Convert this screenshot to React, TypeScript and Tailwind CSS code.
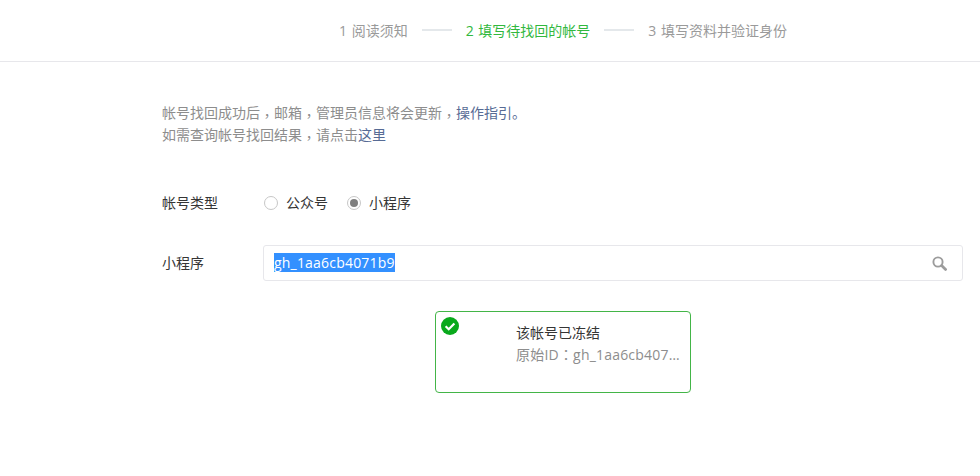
import React from "react"

const font = { fontFamily: '"Open Sans", "Noto Sans CJK SC", sans-serif' }

function Dash() {
    return <span className="w-[30px] h-[2px] bg-[#e4e8eb] mx-[14px]"></span>
}

// TC cut sets full-width punctuation in the middle of its box, like the reference
function Comma() {
    return <span className="relative top-[3px] leading-[0] font-['Noto_Sans_CJK_TC']">，</span>
}

function Radio({ label, checked }: { label: string; checked?: boolean }) {
    return (
        <label className="flex items-center text-[14px] text-[#353535]">
            <span className="w-[14px] h-[14px] rounded-full border border-[#c7c7c7] bg-white flex items-center justify-center mr-[8px]">
                {checked && <span className="w-2 h-2 rounded-full bg-[#7f7f7f]"></span>}
            </span>
            <span className="pb-[2px]">{label}</span>
        </label>
    )
}

export default function App() {
    return (
        <div className="w-[980px] h-[476px] bg-white overflow-hidden text-[14px]" style={font}>
            <div className="h-[62px] border-b border-[#e7e7eb] pl-[339px] flex items-center pb-[1px]">
                <div className="flex items-center text-[#9a9a9a] text-[14px]">
                    <span><span className="mr-px">1</span> 阅读须知</span>
                    <Dash />
                    <span className="text-[#32b83e]"><span className="mr-px">2</span> 填写待找回的帐号</span>
                    <Dash />
                    <span><span className="mr-px">3</span> 填写资料并验证身份</span>
                </div>
            </div>

            <div className="pl-[162px] pr-[17px]">
                <div className="mt-[40px] leading-[22px] text-[#8d8d8d]">
                    <p>
                        帐号找回成功后<Comma />邮箱<Comma />管理员信息将会更新<Comma /><span className="text-[#576b95]">操作指引。</span>
                    </p>
                    <p>
                        如需查询帐号找回结果<Comma />请点击<span className="text-[#576b95]">这里</span>
                    </p>
                </div>

                <div className="flex items-center mt-[46px] h-[22px]">
                    <span className="w-[102px] text-[#353535] pb-[2px]">帐号类型</span>
                    <div className="flex items-center gap-[19px]">
                        <Radio label="公众号" />
                        <Radio label="小程序" checked />
                    </div>
                </div>

                <div className="flex items-center mt-[31px]">
                    <span className="w-[101px] text-[#353535] pb-[2px]">小程序</span>
                    <div className="flex-1 h-[36px] border border-[#e7e7eb] rounded-[3px] flex items-center justify-between pl-[10px] pr-[15px]">
                        <span className="bg-[#3390ff] text-white leading-[19px] tracking-[0.2px] mb-[1px]">gh_1aa6cb4071b9</span>
                        <svg width="15" height="15" viewBox="0 0 15 15" fill="none">
                            <circle cx="6" cy="6" r="4.6" stroke="#9c9c9c" strokeWidth="1.9" />
                            <path d="M9.6 9.6L13.6 13.4" stroke="#9c9c9c" strokeWidth="2.8" strokeLinecap="round" />
                        </svg>
                    </div>
                </div>

                <div className="relative ml-[273px] mt-[30px] w-[256px] h-[82px] border border-[#43b548] rounded-[4px] pl-[80px] pr-[9px] pt-[10px] leading-[22px]">
                    <svg className="absolute left-[5px] top-[5px]" width="18" height="18" viewBox="0 0 18 18">
                        <circle cx="9" cy="9" r="9" fill="#09a91c" />
                        <path d="M4.6 9.2L7.7 12.2L13.4 6.4" fill="none" stroke="#fff" strokeWidth="2.2" />
                    </svg>
                    <p className="text-[#353535]">该帐号已冻结</p>
                    <p className="text-[#8d8d8d] truncate tracking-[0.2px]">原始ID<span className="leading-[0] font-['Noto_Sans_CJK_TC']">：</span>gh_1aa6cb4071b9</p>
                </div>
            </div>
        </div>
    )
}
